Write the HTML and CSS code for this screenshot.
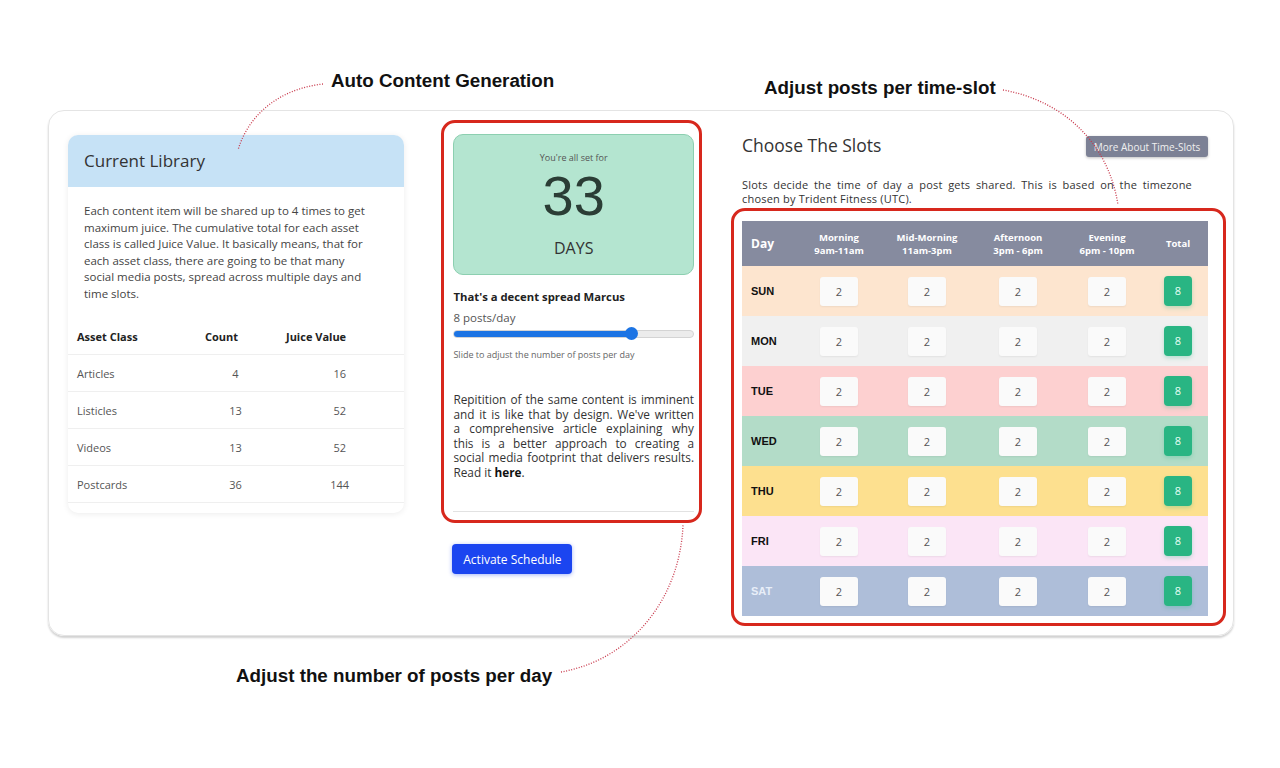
FILE: index.html
```html
<!DOCTYPE html>
<html lang="en">
<head>
    <meta charset="UTF-8">
    <title>Schedule Setup</title>
    <link rel="stylesheet" href="styles.css">
</head>
<body>
    <div class="stage">
        <div class="notes-top">
            <div class="note note-left">Auto Content Generation</div>
            <div class="note note-right">Adjust posts per time-slot</div>
        </div>

        <div class="board">
            <section class="library">
                <div class="library-head">Current Library</div>
                <p class="library-text">Each content item will be shared up to 4 times to get maximum juice. The cumulative total for each asset class is called Juice Value. It basically means, that for each asset class, there are going to be that many social media posts, spread across multiple days and time slots.</p>
                <table class="assets">
                    <colgroup><col class="c-name"><col class="c-count"><col class="c-juice"></colgroup>
                    <tr><th class="name">Asset Class</th><th>Count</th><th>Juice Value</th></tr>
                    <tr><td class="name">Articles</td><td class="count">4</td><td class="juice">16</td></tr>
                    <tr><td class="name">Listicles</td><td class="count">13</td><td class="juice">52</td></tr>
                    <tr><td class="name">Videos</td><td class="count">13</td><td class="juice">52</td></tr>
                    <tr><td class="name">Postcards</td><td class="count">36</td><td class="juice">144</td></tr>
                </table>
            </section>

            <div class="middle">
                <section class="spread">
                    <div class="days-box">
                        <div class="days-pre">You're all set for</div>
                        <div class="days-num">33</div>
                        <div class="days-unit">DAYS</div>
                    </div>
                    <div class="spread-title">That's a decent spread Marcus</div>
                    <div class="spread-rate">8 posts/day</div>
                    <div class="slider">
                        <div class="slider-fill" style="width: 74%"></div>
                        <span class="slider-thumb" style="left: 74%"></span>
                    </div>
                    <div class="slider-hint">Slide to adjust the number of posts per day</div>
                    <p class="spread-text">
                        <span class="line">Repitition of the same content is imminent</span>
                        <span class="line">and it is like that by design. We've written</span>
                        <span class="line">a comprehensive article explaining why</span>
                        <span class="line">this is a better approach to creating a</span>
                        <span class="line">social media footprint that delivers results.</span>
                        Read it <b>here</b>.
                    </p>
                    <hr class="spread-rule">
                </section>
                <button class="btn-activate">Activate Schedule</button>
            </div>

            <section class="slots">
                <div class="slots-head">
                    <h2 class="slots-title">Choose The Slots</h2>
                    <button class="btn-more">More About Time-Slots</button>
                </div>
                <p class="slots-text">Slots decide the time of day a post gets shared. This is based on the timezone chosen by Trident Fitness (UTC).</p>
                <div class="slots-frame">
                    <table class="slots-table">
                        <colgroup><col class="s-day"><col class="s-1"><col class="s-2"><col class="s-3"><col class="s-4"><col class="s-total"></colgroup>
                        <tr>
                            <th class="day">Day</th>
                            <th>Morning<br>9am-11am</th>
                            <th>Mid-Morning<br>11am-3pm</th>
                            <th>Afternoon<br>3pm - 6pm</th>
                            <th>Evening<br>6pm - 10pm</th>
                            <th>Total</th>
                        </tr>
                        <tr class="sun"><td class="day">SUN</td><td><span class="cell">2</span></td><td><span class="cell">2</span></td><td><span class="cell">2</span></td><td><span class="cell">2</span></td><td><span class="total">8</span></td></tr>
                        <tr class="mon"><td class="day">MON</td><td><span class="cell">2</span></td><td><span class="cell">2</span></td><td><span class="cell">2</span></td><td><span class="cell">2</span></td><td><span class="total">8</span></td></tr>
                        <tr class="tue"><td class="day">TUE</td><td><span class="cell">2</span></td><td><span class="cell">2</span></td><td><span class="cell">2</span></td><td><span class="cell">2</span></td><td><span class="total">8</span></td></tr>
                        <tr class="wed"><td class="day">WED</td><td><span class="cell">2</span></td><td><span class="cell">2</span></td><td><span class="cell">2</span></td><td><span class="cell">2</span></td><td><span class="total">8</span></td></tr>
                        <tr class="thu"><td class="day">THU</td><td><span class="cell">2</span></td><td><span class="cell">2</span></td><td><span class="cell">2</span></td><td><span class="cell">2</span></td><td><span class="total">8</span></td></tr>
                        <tr class="fri"><td class="day">FRI</td><td><span class="cell">2</span></td><td><span class="cell">2</span></td><td><span class="cell">2</span></td><td><span class="cell">2</span></td><td><span class="total">8</span></td></tr>
                        <tr class="sat"><td class="day">SAT</td><td><span class="cell">2</span></td><td><span class="cell">2</span></td><td><span class="cell">2</span></td><td><span class="cell">2</span></td><td><span class="total">8</span></td></tr>
                    </table>
                </div>
            </section>
        </div>

        <div class="note note-bottom">Adjust the number of posts per day</div>

        <!-- dotted pointer lines from the notes to the panels -->
        <svg class="curves" width="1280" height="768" viewBox="0 0 1280 768">
            <path d="M323 84 C 285 88, 250 110, 238 150"/>
            <path d="M1003 90 C 1060 100, 1108 140, 1118 205"/>
            <path d="M561 672 C 630 660, 680 600, 683 525"/>
        </svg>
    </div>
</body>
</html>
```

FILE: styles.css
```css
body { margin: 0; font-family: "Open Sans", Arial, sans-serif; background: #fff; color: #333; }
.stage { position: relative; width: 1280px; height: 768px; padding-top: 70px; box-sizing: border-box; overflow: hidden; }

.note { font-family: "Liberation Sans", Arial, sans-serif; font-weight: bold; font-size: 18.8px; line-height: 22px; color: #111; }
.notes-top { display: grid; grid-template-columns: 764px 1fr; height: 40px; }
.note-left { padding-left: 331px; }
.note-right { margin-top: 7px; }
.note-bottom { margin-top: 29px; padding-left: 236px; }

.curves { position: absolute; top: 0; left: 0; pointer-events: none; }
.curves path { fill: none; stroke: #c8374a; stroke-width: 1.3; stroke-dasharray: 1 1.6; }

.board { margin-left: 48px; width: 1186px; height: 526px; box-sizing: border-box; border: 1px solid #e4e4e4; border-radius: 16px; box-shadow: 0 2px 2px rgba(0,0,0,0.18); padding: 9px 7px 0 19px; display: flex; align-items: flex-start; }

/* library */
.library { width: 337px; height: 378px; margin-top: 15px; border-radius: 10px; box-shadow: 0 1px 6px rgba(0,0,0,0.08); overflow: hidden; background: #fff; }
.library-head { height: 52px; background: #c6e2f6; padding-left: 16px; font-size: 17px; line-height: 52px; color: #333; }
.library-text { margin: 16px 0 0; padding: 0 30px 0 16px; font-size: 11.5px; line-height: 16.5px; color: #444; }
.assets { width: 100%; margin-top: 16px; border-collapse: collapse; table-layout: fixed; font-size: 11px; }
.c-name { width: 137px; }
.c-count { width: 81px; }
.assets th { height: 36px; padding: 0; text-align: left; font-weight: bold; color: #222; }
.assets td { height: 36px; padding: 0; border-top: 1px solid #efefef; color: #555; }
.assets tr:last-child td { border-bottom: 1px solid #efefef; }
.assets .name { padding-left: 9px; }
.assets .count { text-align: center; padding-right: 20px; }
.assets .juice { text-align: center; padding-right: 11px; }

/* posts per day */
.middle { width: 261px; margin-left: 37px; }
.spread { height: 403px; box-sizing: border-box; border: 3px solid #d7281d; border-radius: 14px; padding: 11px 5px 8px 9px; display: flex; flex-direction: column; }
.days-box { height: 141px; box-sizing: border-box; border: 1px solid #8ccfb0; border-radius: 10px; background: #b4e5d0; text-align: center; padding-top: 17px; }
.days-pre { font-size: 9px; line-height: 12px; color: #555; }
.days-num { margin-top: 4px; font-family: "Liberation Sans", Arial, sans-serif; font-size: 56px; line-height: 56px; color: #2b3d35; }
.days-unit { margin-top: 14px; font-size: 16px; line-height: 20px; color: #333; }
.spread-title { margin-top: 14px; font-size: 11.3px; line-height: 16px; font-weight: bold; color: #222; }
.spread-rate { margin-top: 5px; font-size: 11.5px; line-height: 16px; color: #555; }
.slider { position: relative; margin-top: 4px; height: 6px; background: #ececec; border: 1px solid #d4d4d4; border-radius: 4px; }
.slider-fill { height: 100%; background: #1c74e4; border-radius: 4px; }
.slider-thumb { position: absolute; top: -4px; width: 13px; height: 13px; margin-left: -6px; background: #1c74e4; border-radius: 50%; }
.slider-hint { margin-top: 11px; font-size: 9px; line-height: 12px; color: #666; }
.spread-text { margin: 31px 0 0; font-size: 11.8px; line-height: 14.5px; color: #333; }
.spread-text .line { display: block; text-align: justify; text-align-last: justify; }
.spread-text b { color: #111; }
.spread-rule { margin: auto 0 0; border: 0; border-top: 1px solid #e2e2e2; }
.btn-activate { margin: 21px 0 0 11px; width: 120px; height: 30px; padding: 0; background: #1b45f0; color: #fff; border: 0; border-radius: 4px; font-family: inherit; font-size: 12px; box-shadow: 0 1px 4px rgba(27,69,240,0.4); cursor: pointer; }

/* time slots */
.slots { width: 495px; margin-left: 29px; }
.slots-head { display: flex; justify-content: space-between; align-items: center; height: 21px; margin-top: 16px; padding: 0 18px 0 11px; }
.slots-title { margin: 0 0 4px; font-size: 17.5px; font-weight: 400; color: #333; }
.btn-more { width: 122px; height: 21px; padding: 0; background: #7c8195; color: #f0f0f0; border: 0; border-radius: 3px; font-family: inherit; font-size: 10px; box-shadow: 0 1px 3px rgba(0,0,0,0.25); }
.slots-text { margin: 21px 0 0; padding: 0 34px 0 11px; font-size: 11px; line-height: 14px; letter-spacing: 0.2px; text-align: justify; color: #333; }
.slots-frame { margin-top: 2px; height: 418px; box-sizing: border-box; border: 3px solid #d7281d; border-radius: 14px; padding: 10px 15px 7px 8px; }
.slots-table { width: 466px; border-collapse: collapse; table-layout: fixed; }
.s-day { width: 52px; }
.s-1 { width: 90px; }
.s-2 { width: 86px; }
.s-3 { width: 96px; }
.s-4 { width: 82px; }
.slots-table th { height: 45px; padding: 0; background: #868b9f; color: #fff; font-size: 9.5px; line-height: 13px; font-weight: bold; text-align: center; }
.slots-table th.day { text-align: left; padding-left: 9px; font-size: 12px; }
.slots-table td { height: 50px; padding: 0; text-align: center; }
.slots-table td.day { text-align: left; padding-left: 9px; font-family: "Liberation Sans", Arial, sans-serif; font-weight: bold; font-size: 11px; color: #111; }
.cell { display: inline-block; width: 38px; height: 29px; line-height: 29px; background: #fafafa; border-radius: 3px; font-size: 11px; color: #555; box-shadow: 0 1px 2px rgba(0,0,0,0.06); }
.total { display: inline-block; width: 28px; height: 30px; line-height: 30px; background: #29b583; color: #eafff5; border-radius: 4px; font-size: 11px; box-shadow: 0 2px 4px rgba(41,181,131,0.3); }
.sun { background: #fde5cf; }
.mon { background: #f0f0f0; }
.tue { background: #fdd0d0; }
.wed { background: #b3dcc8; }
.thu { background: #fde08f; }
.fri { background: #fbe5f6; }
.sat { background: #aebed9; }
.slots-table .sat td.day { color: #e8eef8; }
```
